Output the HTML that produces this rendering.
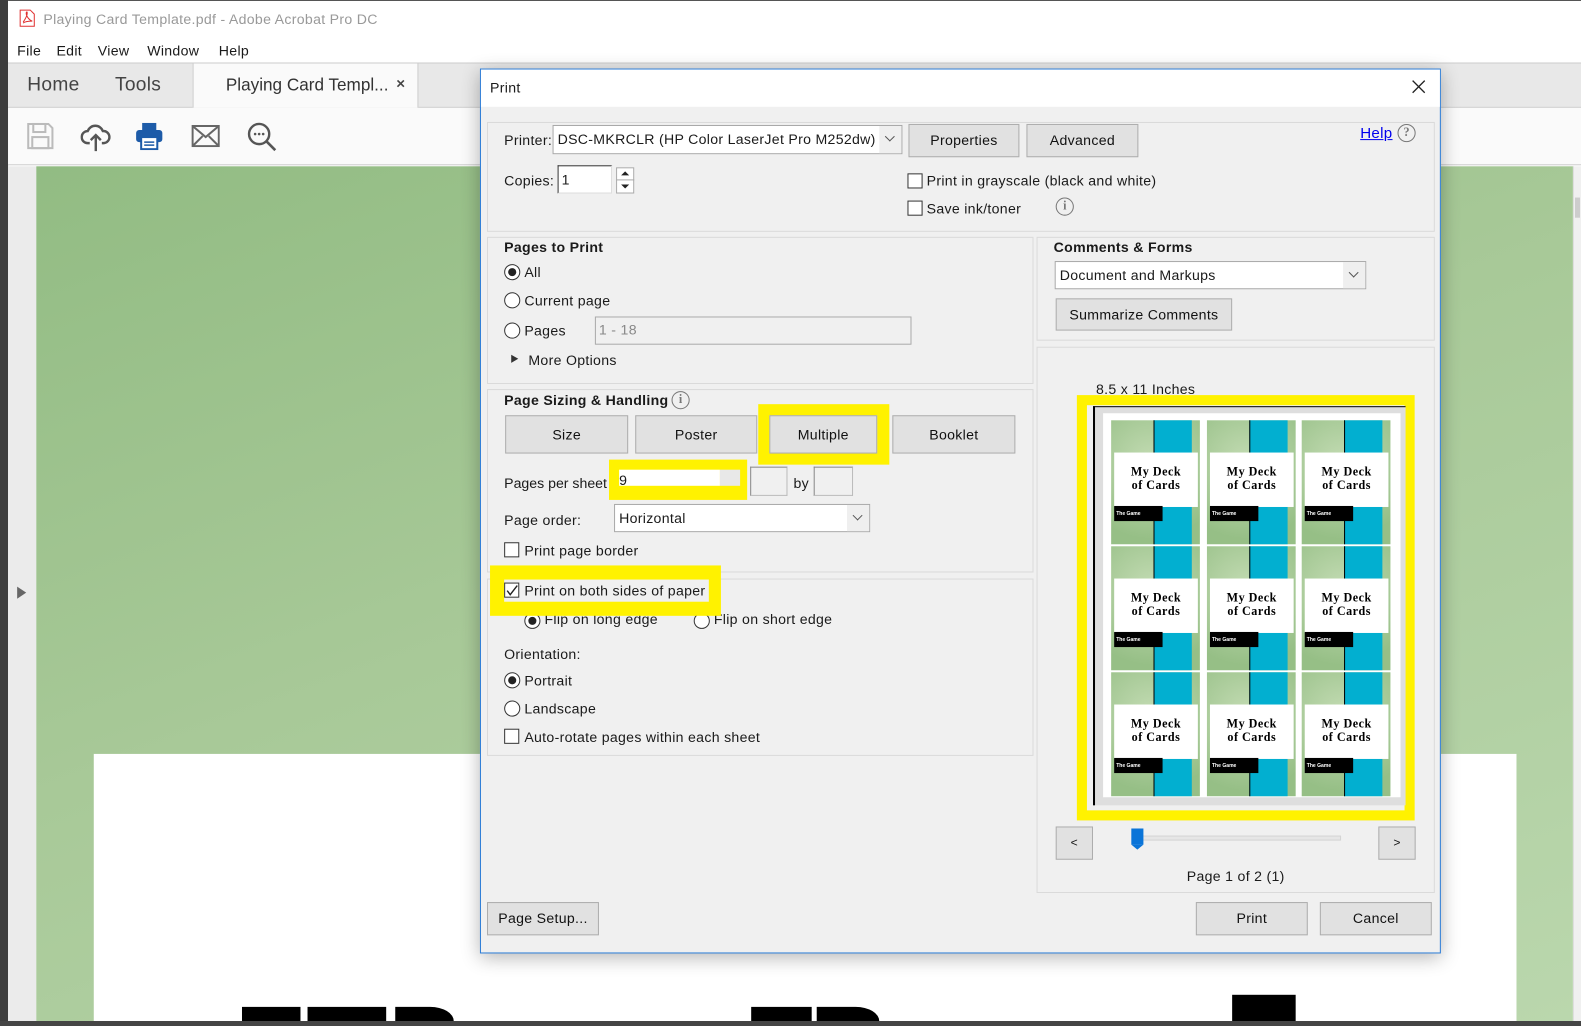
<!DOCTYPE html>
<html><head><meta charset="utf-8"><style>
*{box-sizing:border-box;margin:0;padding:0}
html,body{width:1581px;height:1026px;overflow:hidden;background:#fff}
#w{position:absolute;left:0;top:0;width:1568px;height:1018px;transform:scale(1.0083,1.0079);transform-origin:0 0;font-family:"Liberation Sans",sans-serif;font-size:14px;color:#1a1a1a}
.a{position:absolute}
.t{position:absolute;white-space:nowrap;line-height:16px;letter-spacing:.3px}
.gb{position:absolute;border:1px solid #dadada}
.btn{position:absolute;background:#e1e1e1;border:1px solid #adadad;text-align:center;font-size:14px;color:#111;letter-spacing:.3px}
.sel{position:absolute;background:#fff;border:1px solid #a8a8a8}
.sel .ar{position:absolute;right:0;top:0;bottom:0;width:22px;background:#efefef;}
.sel .ar:after{content:"";position:absolute;left:7px;top:7px;width:6px;height:6px;border-right:1px solid #555;border-bottom:1px solid #555;transform:rotate(45deg)}
.cb{position:absolute;width:15px;height:15px;border:1px solid #333;background:#fff}
.rd{position:absolute;width:16px;height:16px;border:1px solid #333;border-radius:50%;background:#fff}
.rd.on:after{content:"";position:absolute;left:3px;top:3px;width:8px;height:8px;border-radius:50%;background:#222}
.y{position:absolute;background:#fff200}
.card{position:absolute;width:88px;height:123px;background:radial-gradient(circle at 45% 35%,#c4dcb4,#96bf86 80%)}
.card .bl{position:absolute;left:42px;top:0;width:38px;height:123px;background:#02afd0;border-left:1px solid #000}
.card .wb{position:absolute;left:3px;top:32px;width:83px;height:54px;background:#fff;text-align:center;font-family:"Liberation Serif",serif;font-weight:900;font-size:12px;line-height:13px;padding-top:13px;letter-spacing:.5px;color:#000}
.card .lb{position:absolute;left:3px;top:85px;width:48px;height:15px;background:#000;color:#fff;font-size:5px;font-weight:bold;padding:5px 0 0 2px}
.ic{position:absolute;width:18px;height:18px;border:1.5px solid #777;border-radius:50%;color:#777;font-size:12px;text-align:center;line-height:15px;font-family:"Liberation Serif",serif;font-weight:bold}
</style></head><body><div id="w">
<div class="a" style="left:0;top:0;width:8px;height:1018px;background:#3d3d3d"></div>
<div class="a" style="left:8px;top:0;width:1560px;height:1px;background:#555"></div>
<div class="a" style="left:8px;top:1px;width:1560px;height:36px;background:#fff"></div>
<svg class="a" style="left:19px;top:9px" width="16" height="18" viewBox="0 0 16 18"><path d="M1 1h10l4 4v12H1z" fill="#fff" stroke="#e03030"/><path d="M4 13c2-3 4-7 4-9s-1-1-1 0c0 3 3 7 6 8-3 0-7 0-9 2" fill="none" stroke="#e03030" stroke-width="1"/></svg>
<div class="t" style="left:43px;top:11px;color:#999;font-size:14px">Playing Card Template.pdf - Adobe Acrobat Pro DC</div>
<div class="a" style="left:8px;top:37px;width:1560px;height:25px;background:#fff"></div>
<div class="t" style="left:17px;top:42px">File</div><div class="t" style="left:56px;top:42px">Edit</div><div class="t" style="left:97px;top:42px">View</div><div class="t" style="left:146px;top:42px">Window</div><div class="t" style="left:217px;top:42px">Help</div>
<div class="a" style="left:8px;top:62px;width:1560px;height:45px;background:#e8e8e8;border-top:1px solid #ccc;border-bottom:1px solid #ccc"></div>
<div class="t" style="left:27px;top:75px;font-size:19px;color:#444;line-height:20px">Home</div>
<div class="t" style="left:114px;top:75px;font-size:19px;color:#444;line-height:20px">Tools</div>
<div class="a" style="left:191px;top:63px;width:224px;height:44px;background:#fafafa;border-left:1px solid #ccc;border-right:1px solid #ccc"></div>
<div class="t" style="left:224px;top:77px;font-size:17px;color:#333;letter-spacing:0">Playing Card Templ...</div>
<div class="t" style="left:393px;top:76px;font-size:15px;color:#444;font-weight:bold">×</div>
<div class="a" style="left:8px;top:107px;width:1560px;height:57px;background:#fafafa;border-bottom:1px solid #ccc"></div>
<svg class="a" style="left:26px;top:121px" width="28" height="28" viewBox="0 0 28 28"><path d="M2 2h20l4 4v20H2z" fill="none" stroke="#bbb" stroke-width="2"/><rect x="7" y="2" width="12" height="8" fill="none" stroke="#bbb" stroke-width="2"/><rect x="6" y="15" width="16" height="11" fill="none" stroke="#bbb" stroke-width="2"/></svg>
<svg class="a" style="left:80px;top:121px" width="30" height="30" viewBox="0 0 30 30"><path d="M9 21H7a6 6 0 0 1 0-12 8 8 0 0 1 15 0 6 6 0 0 1 1 12h-2" fill="none" stroke="#555" stroke-width="2.4"/><path d="M15 29V13M10 18l5-5 5 5" fill="none" stroke="#555" stroke-width="2.4"/></svg>
<svg class="a" style="left:134px;top:121px" width="28" height="28" viewBox="0 0 28 28"><rect x="7" y="1" width="14" height="7" fill="#1d5ba8"/><rect x="1" y="8" width="26" height="12" rx="3" fill="#1d5ba8"/><rect x="6" y="15" width="16" height="12" fill="#fff" stroke="#1d5ba8" stroke-width="2"/><path d="M9 20h10M9 23h10" stroke="#1d5ba8" stroke-width="1.5"/></svg>
<svg class="a" style="left:190px;top:124px" width="28" height="22" viewBox="0 0 28 22"><rect x="1" y="1" width="26" height="20" fill="none" stroke="#666" stroke-width="2"/><path d="M1 1l13 11L27 1M1 21l10-10M27 21L17 11" fill="none" stroke="#666" stroke-width="2"/></svg>
<svg class="a" style="left:245px;top:121px" width="30" height="30" viewBox="0 0 30 30"><circle cx="12" cy="12" r="10" fill="none" stroke="#555" stroke-width="2.4"/><path d="M19 19l9 9" stroke="#555" stroke-width="2.6"/><circle cx="8" cy="12" r="1.3" fill="#555"/><circle cx="12" cy="12" r="1.3" fill="#555"/><circle cx="16" cy="12" r="1.3" fill="#555"/></svg>
<div class="a" style="left:8px;top:165px;width:28px;height:848px;background:#ebebeb"></div>
<div class="a" style="left:17px;top:582px;width:0;height:0;border-left:9px solid #666;border-top:6px solid transparent;border-bottom:6px solid transparent"></div>
<div class="a" style="left:36px;top:165px;width:1524px;height:848px;background:linear-gradient(160deg,#92bc83 0%,#a8c998 45%,#bad7ad 100%)"></div>
<div class="a" style="left:1560px;top:165px;width:8px;height:848px;background:#f0f0f0;border-left:1px solid #ddd"></div>
<div class="a" style="left:1562px;top:196px;width:5px;height:20px;background:#cdcdcd"></div>
<div class="a" style="left:93px;top:748px;width:1411px;height:265px;background:#fff"></div>
<div class="a" style="left:240px;top:999px;width:58px;height:14px;background:#000"></div>
<div class="a" style="left:305px;top:999px;width:78px;height:14px;background:#000"></div>
<div class="a" style="left:392px;top:999px;width:58px;height:14px;background:#000;border-top-right-radius:50px 30px"></div>
<div class="a" style="left:745px;top:999px;width:60px;height:14px;background:#000"></div>
<div class="a" style="left:810px;top:999px;width:62px;height:14px;background:#000;border-top-right-radius:50px 30px"></div>
<div class="a" style="left:1222px;top:987px;width:63px;height:26px;background:#000"></div>
<div class="a" style="left:0;top:1013px;width:1568px;height:5px;background:#454545"></div>
<div class="a" style="left:476px;top:68px;width:953px;height:878px;background:#f0f0f0;border:1px solid #2a7bd6;box-shadow:0 4px 18px rgba(0,0,0,.3)"></div>
<div class="a" style="left:477px;top:69px;width:951px;height:37px;background:#fff"></div>
<div class="t" style="left:486px;top:79px">Print</div>
<svg class="a" style="left:1400px;top:79px" width="14" height="14" viewBox="0 0 14 14"><path d="M1 1l12 12M13 1L1 13" stroke="#222" stroke-width="1.3"/></svg>
<div class="gb" style="left:483px;top:121px;width:940px;height:109px"></div>
<div class="t" style="left:500px;top:131px">Printer:</div>
<div class="sel" style="left:548px;top:124px;width:347px;height:29px"><div class="ar"></div></div>
<div class="t" style="left:553px;top:130px">DSC-MKRCLR (HP Color LaserJet Pro M252dw)</div>
<div class="btn" style="left:901px;top:123px;width:110px;height:33px;line-height:31px">Properties</div>
<div class="btn" style="left:1018px;top:123px;width:111px;height:33px;line-height:31px">Advanced</div>
<div class="t" style="left:1349px;top:125px;color:#0000ee;text-decoration:underline;font-size:15px">Help</div>
<div class="ic" style="left:1386px;top:123px">?</div>
<div class="t" style="left:500px;top:171px">Copies:</div>
<div class="a" style="left:553px;top:164px;width:54px;height:28px;background:#fff;border:1px solid #333;border-right-color:#ddd;border-bottom-color:#ddd"></div>
<div class="t" style="left:557px;top:170px">1</div>
<div class="a" style="left:611px;top:166px;width:18px;height:26px;border:1px solid #aaa;background:#fff"></div>
<div class="a" style="left:611px;top:178px;width:18px;height:1px;background:#aaa"></div>
<div class="a" style="left:616px;top:170px;border-left:4px solid transparent;border-right:4px solid transparent;border-bottom:4px solid #222"></div>
<div class="a" style="left:616px;top:183px;border-left:4px solid transparent;border-right:4px solid transparent;border-top:4px solid #222"></div>
<div class="cb" style="left:900px;top:172px"></div><div class="t" style="left:919px;top:171px">Print in grayscale (black and white)</div>
<div class="cb" style="left:900px;top:199px"></div><div class="t" style="left:919px;top:199px">Save ink/toner</div>
<div class="ic" style="left:1047px;top:196px">i</div>
<div class="gb" style="left:483px;top:235px;width:542px;height:146px"></div>
<div class="t" style="left:500px;top:237px;font-weight:bold">Pages to Print</div>
<div class="rd on" style="left:500px;top:262px"></div><div class="t" style="left:520px;top:262px">All</div>
<div class="rd" style="left:500px;top:290px"></div><div class="t" style="left:520px;top:290px">Current page</div>
<div class="rd" style="left:500px;top:320px"></div><div class="t" style="left:520px;top:320px">Pages</div>
<div class="a" style="left:590px;top:314px;width:314px;height:28px;background:#f0f0f0;border:1px solid #aaa"></div>
<div class="t" style="left:594px;top:319px;color:#888">1 - 18</div>
<div class="a" style="left:507px;top:352px;border-left:7px solid #333;border-top:4px solid transparent;border-bottom:4px solid transparent"></div>
<div class="t" style="left:524px;top:349px">More Options</div>
<div class="gb" style="left:1028px;top:235px;width:395px;height:103px"></div>
<div class="t" style="left:1045px;top:237px;font-weight:bold">Comments &amp; Forms</div>
<div class="sel" style="left:1046px;top:259px;width:309px;height:28px"><div class="ar"></div></div>
<div class="t" style="left:1051px;top:265px">Document and Markups</div>
<div class="btn" style="left:1047px;top:296px;width:175px;height:32px;line-height:30px">Summarize Comments</div>
<div class="gb" style="left:1028px;top:344px;width:395px;height:542px"></div>
<div class="t" style="left:1087px;top:378px">8.5 x 11 Inches</div>
<div class="y" style="left:1068px;top:392px;width:335px;height:422px"></div>
<div class="a" style="left:1078px;top:402px;width:315px;height:402px;background:#f0f0f0"></div>
<div class="a" style="left:1084px;top:403px;width:310px;height:396px;background:#dedede;border-left:2px solid #000;border-top:1px solid #000"></div>
<div class="a" style="left:1094px;top:410px;width:295px;height:381px;background:#fff"></div>
<div class="btn" style="left:1047px;top:820px;width:37px;height:33px;line-height:31px;font-size:12px">&lt;</div>
<div class="btn" style="left:1367px;top:820px;width:37px;height:33px;line-height:31px;font-size:12px">&gt;</div>
<div class="a" style="left:1130px;top:829px;width:200px;height:5px;background:#e6e6e6;border:1px solid #d4d4d4"></div>
<div class="a" style="left:1122px;top:822px;width:12px;height:16px;background:#0a74d8"></div>
<div class="a" style="left:1122px;top:838px;border-left:6px solid transparent;border-right:6px solid transparent;border-top:5px solid #0a74d8"></div>
<div class="t" style="left:1177px;top:861px">Page 1 of 2 (1)</div>
<div class="gb" style="left:483px;top:386px;width:542px;height:182px"></div>
<div class="t" style="left:500px;top:389px;font-weight:bold">Page Sizing &amp; Handling</div>
<div class="ic" style="left:666px;top:388px">i</div>
<div class="y" style="left:752px;top:401px;width:130px;height:60px"></div>
<div class="btn" style="left:501px;top:412px;width:122px;height:38px;line-height:36px">Size</div>
<div class="btn" style="left:630px;top:412px;width:121px;height:38px;line-height:36px">Poster</div>
<div class="btn" style="left:763px;top:412px;width:107px;height:38px;line-height:36px">Multiple</div>
<div class="btn" style="left:885px;top:412px;width:122px;height:38px;line-height:36px">Booklet</div>
<div class="y" style="left:604px;top:456px;width:137px;height:40px"></div>
<div class="t" style="left:500px;top:471px;letter-spacing:0">Pages per sheet</div>
<div class="a" style="left:614px;top:466px;width:100px;height:16px;background:#fff"></div>
<div class="a" style="left:714px;top:466px;width:20px;height:16px;background:#e8e8e8"></div>
<div class="t" style="left:614px;top:468px">9</div>
<div class="a" style="left:744px;top:463px;width:37px;height:29px;border:1px solid #bbb;border-top-color:#888;border-left-color:#888"></div>
<div class="t" style="left:787px;top:471px">by</div>
<div class="a" style="left:807px;top:463px;width:39px;height:29px;border:1px solid #bbb;border-top-color:#888;border-left-color:#888"></div>
<div class="t" style="left:500px;top:508px">Page order:</div>
<div class="sel" style="left:609px;top:500px;width:254px;height:28px"><div class="ar"></div></div>
<div class="t" style="left:614px;top:506px">Horizontal</div>
<div class="cb" style="left:500px;top:538px"></div><div class="t" style="left:520px;top:538px">Print page border</div>
<div class="gb" style="left:483px;top:574px;width:542px;height:176px"></div>
<div class="rd on" style="left:520px;top:608px"></div><div class="t" style="left:540px;top:606px">Flip on long edge</div>
<div class="rd" style="left:688px;top:608px"></div><div class="t" style="left:708px;top:606px">Flip on short edge</div>
<div class="y" style="left:486px;top:561px;width:229px;height:50px"></div>
<div class="a" style="left:500px;top:575px;width:203px;height:22px;background:#f0f0f0"></div>
<div class="cb" style="left:500px;top:578px"></div>
<svg class="a" style="left:502px;top:580px" width="12" height="12" viewBox="0 0 12 12"><path d="M1 6l3 4 7-9" fill="none" stroke="#222" stroke-width="1.4"/></svg>
<div class="t" style="left:520px;top:578px">Print on both sides of paper</div>
<div class="t" style="left:500px;top:641px">Orientation:</div>
<div class="rd on" style="left:500px;top:667px"></div><div class="t" style="left:520px;top:667px">Portrait</div>
<div class="rd" style="left:500px;top:695px"></div><div class="t" style="left:520px;top:695px">Landscape</div>
<div class="cb" style="left:500px;top:723px"></div><div class="t" style="left:520px;top:723px">Auto-rotate pages within each sheet</div>
<div class="btn" style="left:483px;top:895px;width:111px;height:33px;line-height:31px">Page Setup...</div>
<div class="btn" style="left:1186px;top:895px;width:111px;height:33px;line-height:31px">Print</div>
<div class="btn" style="left:1309px;top:895px;width:111px;height:33px;line-height:31px">Cancel</div>
<div class="a" style="left:1102px;top:417px">
<div class="card" style="left:0;top:0"><div class="bl"></div><div class="wb">My Deck<br>of Cards</div><div class="lb">The Game</div></div>
<div class="card" style="left:95px;top:0"><div class="bl"></div><div class="wb">My Deck<br>of Cards</div><div class="lb">The Game</div></div>
<div class="card" style="left:189px;top:0"><div class="bl"></div><div class="wb">My Deck<br>of Cards</div><div class="lb">The Game</div></div>
<div class="card" style="left:0;top:125px"><div class="bl"></div><div class="wb">My Deck<br>of Cards</div><div class="lb">The Game</div></div>
<div class="card" style="left:95px;top:125px"><div class="bl"></div><div class="wb">My Deck<br>of Cards</div><div class="lb">The Game</div></div>
<div class="card" style="left:189px;top:125px"><div class="bl"></div><div class="wb">My Deck<br>of Cards</div><div class="lb">The Game</div></div>
<div class="card" style="left:0;top:250px"><div class="bl"></div><div class="wb">My Deck<br>of Cards</div><div class="lb">The Game</div></div>
<div class="card" style="left:95px;top:250px"><div class="bl"></div><div class="wb">My Deck<br>of Cards</div><div class="lb">The Game</div></div>
<div class="card" style="left:189px;top:250px"><div class="bl"></div><div class="wb">My Deck<br>of Cards</div><div class="lb">The Game</div></div>
</div>
</div></body></html>
